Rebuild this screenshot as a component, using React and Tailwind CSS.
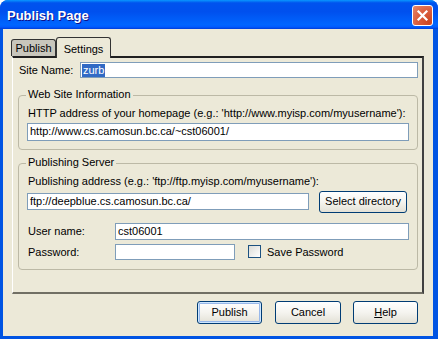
import React from 'react';

const font = { fontFamily: '"Liberation Sans", Arial, sans-serif' };

const Field = ({ className = '', children }) => (
  <div className={`bg-white border border-[#7f9db9] flex items-center px-[2px] text-[11px] leading-[13px] text-black ${className}`}>
    {children}
  </div>
);

const XpButton = ({ className = '', children, isDefault }) => (
  <div
    className={`rounded-[3px] border border-[#003c74] bg-gradient-to-b from-white via-[#f5f4ef] to-[#e3e1d6] flex items-center justify-center text-[11px] text-black ${
      isDefault ? 'shadow-[inset_0_0_0_1px_#cee7ff,inset_0_0_0_2px_#98b8ea]' : ''
    } ${className}`}
  >
    {children}
  </div>
);

const Group = ({ title, className = '', children }) => (
  <div className={`relative border border-[#bcb9a6] rounded-[4px] ${className}`}>
    <span className="absolute left-[7px] -top-[8px] px-[2px] bg-[#ece9d8] text-[11px] leading-[13px] text-black">
      {title}
    </span>
    {children}
  </div>
);

export default function App() {
  return (
    <div className="w-[438px] h-[339px] bg-white" style={font}>
      <div className="w-full h-full flex flex-col rounded-t-[8px] bg-[#0054e3] overflow-hidden">
        {/* title bar */}
        <div className="h-[29px] shrink-0 flex items-center justify-between pl-[7px] pr-[5px] bg-[linear-gradient(to_bottom,#0997ff_0%,#0053ee_10%,#0050ee_40%,#0066ff_85%,#005bff_93%,#003dd7_100%)]">
          <span className="text-white font-bold text-[13px] [text-shadow:1px_1px_#0f1089] mt-[2px]">Publish Page</span>
          <div className="w-[21px] h-[21px] rounded-[3px] border border-white bg-[radial-gradient(circle_at_85%_85%,#cc4622_0%,#dc6040_55%,#e98a6c_100%)] flex items-center justify-center mt-[1px]">
            <svg width="13" height="13" viewBox="0 0 13 13">
              <path d="M2.5 2.5 L10.5 10.5 M10.5 2.5 L2.5 10.5" stroke="white" strokeWidth="2.2" strokeLinecap="square" />
            </svg>
          </div>
        </div>

        {/* body */}
        <div className="flex-1 ml-[3px] mr-[5px] mb-[3px] bg-[#ece9d8] flex flex-col">
          {/* tabs */}
          <div className="h-[27px] pt-[8px] pl-[8px] flex items-end">
            <div className="w-[45px] h-[17px] bg-[#c8c6bc] border border-[#333] border-b-0 rounded-t-[3px] flex items-center justify-center text-[11px] text-black">
              Publish
            </div>
            <div className="relative z-10 w-[55px] h-[21px] -mb-[2px] bg-[#ece9d8] border border-[#333] border-b-0 rounded-t-[3px] flex items-start justify-center pt-[3px] text-[11px] text-black">
              Settings
            </div>
          </div>

          {/* panel */}
          <div className="ml-[9px] w-[412px] h-[238px] border-t-2 border-r-2 border-b-2 border-l border-t-[#202020] border-r-[#404040] border-b-[#716f64] border-l-white flex flex-col">
            <div className="mt-[4px] pl-[6px] flex items-center">
              <span className="w-[61px] text-[11px] text-black">Site Name:</span>
              <Field className="w-[338px] h-[16px]">
                <span className="bg-[#316ac5] text-white px-[1px] -ml-[1px]">zurb</span>
              </Field>
            </div>

            <Group title="Web Site Information" className="ml-[5px] mt-[16px] w-[400px] pt-[11px] pb-[8px] pl-[8px]">
              <div className="text-[11px] leading-[13px] text-black pl-[1px]">
                HTTP address of your homepage (e.g.: 'http://www.myisp.com/myusername'):
              </div>
              <Field className="mt-[3px] w-[382px] h-[18px]">http://www.cs.camosun.bc.ca/~cst06001/</Field>
            </Group>

            <Group title="Publishing Server" className="ml-[5px] mt-[13px] w-[400px] pt-[11px] pb-[9px] pl-[8px]">
              <div className="text-[11px] leading-[13px] text-black pl-[1px]">
                Publishing address (e.g.: 'ftp://ftp.myisp.com/myusername'):
              </div>
              <div className="mt-[3px] h-[22px] flex items-center">
                <Field className="w-[282px] h-[17px]">ftp://deepblue.cs.camosun.bc.ca/</Field>
                <XpButton className="ml-[10px] w-[88px] h-[22px]">Select directory</XpButton>
              </div>
              <div className="mt-[10px] flex items-center">
                <span className="w-[88px] pl-[1px] text-[11px] text-black">User name:</span>
                <Field className="w-[294px] h-[17px]">cst06001</Field>
              </div>
              <div className="mt-[4px] flex items-center">
                <span className="w-[88px] pl-[1px] text-[11px] text-black">Password:</span>
                <Field className="w-[120px] h-[16px]" />
                <div className="ml-[13px] w-[13px] h-[13px] border border-[#1c5180] bg-gradient-to-br from-[#dcdcd7] to-white" />
                <span className="ml-[6px] text-[11px] text-black">Save Password</span>
              </div>
            </Group>
          </div>

          {/* footer buttons */}
          <div className="pt-[7px] pr-[15px] flex justify-end">
            <XpButton isDefault className="w-[65px] h-[23px]">Publish</XpButton>
            <XpButton className="ml-[13px] w-[66px] h-[23px]">Cancel</XpButton>
            <XpButton className="ml-[12px] w-[65px] h-[23px]">
              <span><span className="underline">H</span>elp</span>
            </XpButton>
          </div>
        </div>
      </div>
    </div>
  );
}
